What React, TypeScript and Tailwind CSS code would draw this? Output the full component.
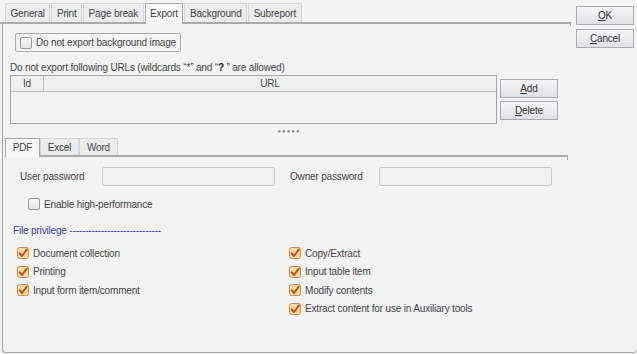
import React from 'react';

const font = { fontFamily: '"Liberation Sans", Arial, sans-serif' };

const Checked: React.FC = () => (
  <svg width="12" height="12" viewBox="0 0 12 12" className="shrink-0">
    <rect x="0.5" y="0.5" width="11" height="11" rx="2" fill="#fcd9a8" stroke="#cf8b3f" />
    <path d="M2.6 6.2 L5 9 L9.8 2.6" fill="none" stroke="#b8520f" strokeWidth="2" strokeLinecap="round" strokeLinejoin="round" />
  </svg>
);

const Unchecked: React.FC = () => (
  <span className="block w-[12px] h-[12px] shrink-0 rounded-[2px] border border-[#9a9a9a] bg-gradient-to-b from-[#f6f6f6] to-[#e6e6e6]" />
);

const Btn: React.FC<{ u: string; rest: string }> = ({ u, rest }) => (
  <button className="w-[58px] h-[19px] border border-[#a9adb1] bg-gradient-to-b from-[#f4f5f6] to-[#dfe1e3] text-[10px] text-[#333] leading-none">
    <span className="underline">{u}</span>
    {rest}
  </button>
);

const tabs = ['General', 'Print', 'Page break', 'Export', 'Background', 'Subreport'];

const Priv: React.FC<{ label: string }> = ({ label }) => (
  <div className="flex items-center gap-[4px] h-[12px]">
    <Checked />
    <span>{label}</span>
  </div>
);

export default function App() {
  return (
    <div className="w-[637px] h-[354px] bg-[#f2f3f3] text-[10px] tracking-[-0.17px] text-[#444] overflow-hidden flex flex-col" style={font}>
      {/* main tabs */}
      <div className="w-[571px] h-[24px] pt-[3px] pl-[5px] flex items-end border-b-[2px] border-[#a8aaab] relative">
        {tabs.map((t) => (
          <div
            key={t}
            className={
              t === 'Export'
                ? 'h-[21px] px-[4.5px] flex items-center border border-b-0 border-[#a7a9ab] bg-[#f7f8f8] -mb-[2px] pb-[2px] mr-[1px]'
                : 'h-[19px] px-[4.5px] flex items-center border border-b-0 border-[#d3d5d6] bg-[#ebecec] mr-[1px]'
            }
          >
            {t}
          </div>
        ))}
        <div className="absolute right-0 top-[22px] w-[1px] h-[4px] bg-[#a8aaab]" />
      </div>

      {/* body */}
      <div className="flex-1 mb-[1px] ml-[2px] border-l border-b border-[#a3a5a6] rounded-bl-[3px] rounded-br-[4px] flex">
        <div className="w-[568px] flex flex-col">
          <div className="ml-[12px] mt-[9px] w-[166px] h-[19px] border border-[#a9abac] rounded-[2px] flex items-center pl-[4px] gap-[4px]">
            <Unchecked />
            <span className="whitespace-nowrap">Do not export background image</span>
          </div>

          <div className="ml-[7px] mt-[11px] leading-none">
            Do not export following URLs (wildcards “*” and “<b className="text-[#222]">?</b> ” are allowed)
          </div>

          <div className="flex mt-[2px] ml-[7px]">
            <div className="w-[487px] h-[49px] border border-[#a4a6a7] bg-[#f2f3f3]">
              <div className="flex h-[16px] border-b border-[#bcbebf] bg-[#eeefef]">
                <div className="w-[33px] border-r border-[#c4c6c7] flex items-center pl-[12px]">Id</div>
                <div className="flex-1 flex items-center justify-center">URL</div>
              </div>
            </div>
            <div className="ml-[3px] mt-[4px] flex flex-col gap-[3px]">
              <Btn u="A" rest="dd" />
              <Btn u="D" rest="elete" />
            </div>
          </div>

          <div className="text-center text-[#8a8a8a] text-[6px] leading-none mt-[4px] tracking-[1px] pl-[4px]">●●●●●</div>

          {/* sub tabs */}
          <div className="ml-[2px] mt-[4px] w-[563px] h-[19px] flex items-end border-b-[2px] border-[#a8aaab] relative">
            <div className="h-[19px] w-[35px] flex items-center justify-center border border-b-0 border-[#a7a9ab] bg-[#f7f8f8] -mb-[2px] pb-[2px]">PDF</div>
            <div className="h-[17px] w-[39px] flex items-center justify-center border border-b-0 border-[#d3d5d6] bg-[#ebecec]">Excel</div>
            <div className="h-[17px] w-[39px] flex items-center justify-center border border-b-0 border-[#d3d5d6] bg-[#ebecec]">Word</div>
            <div className="absolute right-0 top-[17px] w-[1px] h-[5px] bg-[#a8aaab]" />
          </div>

          <div className="flex items-center mt-[10px] ml-[17px] h-[19px]">
            <span className="w-[82px]">User password</span>
            <div className="w-[173px] h-[19px] border border-[#c7c9ca] rounded-[2px] bg-[#eff0f0]" />
            <span className="ml-[15px] w-[89px]">Owner password</span>
            <div className="w-[173px] h-[19px] border border-[#c7c9ca] rounded-[2px] bg-[#eff0f0]" />
          </div>

          <div className="flex items-center gap-[4px] ml-[25px] mt-[12px] h-[12px]">
            <Unchecked />
            <span>Enable high-performance</span>
          </div>

          <div className="ml-[10px] mt-[16px] text-[#3a3ab0] leading-none">File privilege -----------------------------</div>

          <div className="flex mt-[11px] ml-[14px]">
            <div className="w-[272px] flex flex-col gap-[6.5px]">
              <Priv label="Document collection" />
              <Priv label="Printing" />
              <Priv label="Input form item/comment" />
            </div>
            <div className="flex flex-col gap-[6.5px]">
              <Priv label="Copy/Extract" />
              <Priv label="Input table item" />
              <Priv label="Modify contents" />
              <Priv label="Extract content for use in Auxiliary tools" />
            </div>
          </div>
        </div>

        <div className="-mt-[18px] ml-[5px] flex flex-col gap-[4px]">
          <Btn u="O" rest="K" />
          <Btn u="C" rest="ancel" />
        </div>
      </div>
    </div>
  );
}
